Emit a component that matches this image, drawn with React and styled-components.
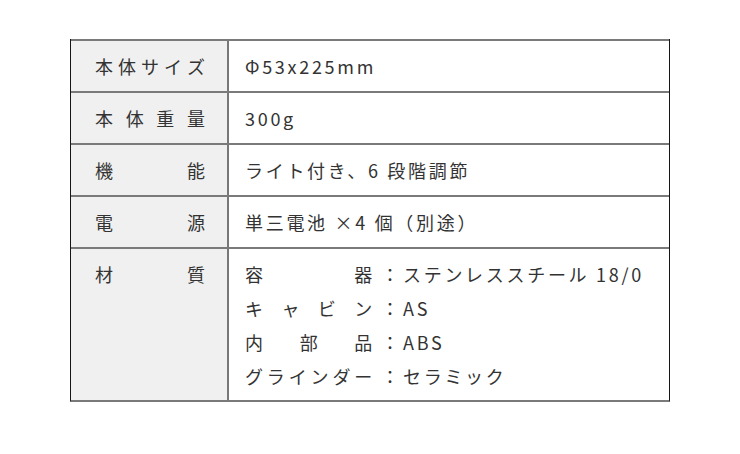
import React from "react";
import styled, { createGlobalStyle } from "styled-components";

const GlobalStyle = createGlobalStyle`
  html, body {
    margin: 0;
    padding: 0;
    background: #ffffff;
  }
  body {
    font-family: "Noto Sans CJK JP", "Noto Sans", sans-serif;
    color: #333333;
  }
`;

const specs = [
  { label: "本体サイズ", value: "Φ53x225mm" },
  { label: "本体重量", value: "300g" },
  { label: "機能", value: "ライト付き、6 段階調節" },
  { label: "電源", value: "単三電池 ×4 個（別途）" },
];

const materials = [
  { name: "容器", value: "ステンレススチール 18/0" },
  { name: "キャビン", value: "AS" },
  { name: "内部品", value: "ABS" },
  { name: "グラインダー", value: "セラミック" },
];

const Page = styled.div`
  width: 740px;
  height: 454px;
  padding: 39px 0 0 70px;
  box-sizing: border-box;
`;

const Table = styled.div`
  width: 600px;
  display: flex;
  flex-direction: column;
  border-left: 1px solid #151515;
  border-right: 1px solid #151515;
  border-bottom: 2px solid #7a7a7a;
  box-sizing: border-box;
`;

const Row = styled.div`
  display: flex;
  border-top: 2px solid #7a7a7a;
  height: ${(p) => (p.$tall ? "151px" : "50px")};
`;

const LabelCell = styled.div`
  width: 158px;
  flex-shrink: 0;
  box-sizing: border-box;
  background: #f0f0f0;
  border-right: 2px solid #777777;
  padding: ${(p) => (p.$top ? "8px 22px 0 24px" : "0 22px 0 24px")};
  display: flex;
  align-items: ${(p) => (p.$top ? "flex-start" : "center")};
`;

const Spread = styled.div`
  display: flex;
  justify-content: space-between;
  width: ${(p) => p.$width || "100%"};
  flex-shrink: 0;
  font-size: 18px;
  line-height: 34px;
`;

const ValueCell = styled.div`
  flex: 1;
  padding: ${(p) => (p.$top ? "8px 0 0 16px" : "0 0 0 16px")};
  display: flex;
  flex-direction: ${(p) => (p.$top ? "column" : "row")};
  align-items: ${(p) => (p.$top ? "flex-start" : "center")};
  font-size: 18px;
  line-height: 34px;
  letter-spacing: 2.7px;
`;

const MaterialLine = styled.div`
  display: flex;
  align-items: center;
`;

const Colon = styled.span`
  width: 26px;
  text-align: center;
  margin-left: 2px;
  letter-spacing: 0;
`;

const spread = (text) => [...text].map((c, i) => <span key={i}>{c}</span>);

export default function App() {
  return (
    <>
      <GlobalStyle />
      <Page>
        <Table>
          {specs.map((s) => (
            <Row key={s.label}>
              <LabelCell>
                <Spread>{spread(s.label)}</Spread>
              </LabelCell>
              <ValueCell>{s.value}</ValueCell>
            </Row>
          ))}
          <Row $tall>
            <LabelCell $top>
              <Spread>{spread("材質")}</Spread>
            </LabelCell>
            <ValueCell $top>
              {materials.map((m) => (
                <MaterialLine key={m.name}>
                  <Spread $width="130px">{spread(m.name)}</Spread>
                  <Colon>：</Colon>
                  <span>{m.value}</span>
                </MaterialLine>
              ))}
            </ValueCell>
          </Row>
        </Table>
      </Page>
    </>
  );
}
